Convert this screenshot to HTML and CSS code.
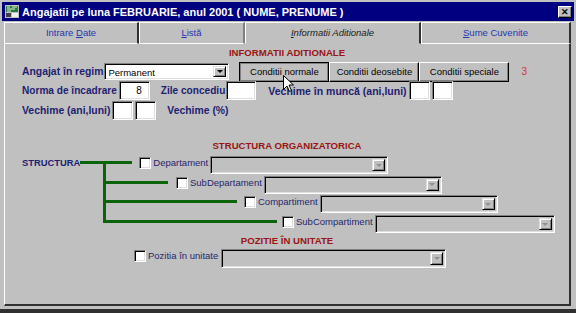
FILE: index.html
```html
<!DOCTYPE html>
<html lang="ro">
<head>
    <meta charset="UTF-8">
    <title>Angajatii pe luna FEBRUARIE</title>
    <link rel="stylesheet" href="styles.css">
</head>
<body>
<div class="window">
    <div class="titlebar">
        <svg class="app-icon" width="14" height="13" viewBox="0 0 14 13">
            <rect x="0" y="0" width="14" height="13" fill="#c0c0c0"/>
            <rect x="1" y="1" width="12" height="6" fill="#2a7a3a"/>
            <path d="M2 2h3M7 2h5M2 4h8M2 6h4" stroke="#e0f0e0" stroke-width="1"/>
            <rect x="1" y="8" width="5" height="4" fill="#404040"/>
            <rect x="7" y="8" width="6" height="4" fill="#f0f0f0"/>
        </svg>
        <span class="title">Angajatii pe luna FEBRUARIE, anul 2001 ( NUME, PRENUME )</span>
        <span class="close">&#x2715;</span>
    </div>

    <div class="tabs">
        <div class="tab tab-intrare">Intrare <u>D</u>ate</div>
        <div class="tab tab-lista"><u>L</u>istă</div>
        <div class="tab tab-info active"><u>I</u>nformatii Aditionale</div>
        <div class="tab tab-sume"><u>S</u>ume Cuvenite</div>
    </div>

    <div class="panel">
        <div class="section-title">INFORMATII ADITIONALE</div>

        <div class="row row-regim">
            <span class="lbl">Angajat în regim</span>
            <span class="combo combo-regim">
                <span class="combo-text">Permanent</span>
                <span class="arrow"><i></i></span>
            </span>
            <span class="btn btn-default">Conditii normale</span>
            <span class="btn">Conditii deosebite</span>
            <span class="btn">Conditii speciale</span>
            <span class="count">3</span>
        </div>

        <div class="row row-norma">
            <span class="lbl">Norma de încadrare</span>
            <span class="field field-norma">8</span>
            <span class="lbl lbl-zile">Zile concediu</span>
            <span class="field field-zile"></span>
            <span class="lbl lbl-munca">Vechime în muncă (ani,luni)</span>
            <span class="field field-small"></span>
            <span class="field field-small"></span>
        </div>

        <div class="row row-vechime">
            <span class="lbl">Vechime (ani,luni)</span>
            <span class="field field-small"></span>
            <span class="field field-small"></span>
            <span class="lbl lbl-proc">Vechime (%)</span>
        </div>

        <div class="section-title section-struct">STRUCTURA ORGANIZATORICA</div>

        <div class="tree">
            <div class="branch branch-1">
                <span class="lbl lbl-struct">STRUCTURA</span>
                <span class="wire"></span>
                <span class="check"></span>
                <span class="check-lbl">Departament</span>
                <span class="combo combo-off"><span class="arrow"><i></i></span></span>
            </div>
            <div class="branch branch-2">
                <span class="wire"></span>
                <span class="check"></span>
                <span class="check-lbl">SubDepartament</span>
                <span class="combo combo-off"><span class="arrow"><i></i></span></span>
            </div>
            <div class="branch branch-3">
                <span class="wire"></span>
                <span class="check"></span>
                <span class="check-lbl">Compartiment</span>
                <span class="combo combo-off"><span class="arrow"><i></i></span></span>
            </div>
            <div class="branch branch-4">
                <span class="wire"></span>
                <span class="check"></span>
                <span class="check-lbl">SubCompartiment</span>
                <span class="combo combo-off combo-wide"><span class="arrow"><i></i></span></span>
            </div>
        </div>

        <div class="section-title section-pozitie">POZITIE ÎN UNITATE</div>

        <div class="row row-pozitie">
            <span class="check"></span>
            <span class="check-lbl">Pozitia în unitate</span>
            <span class="combo combo-off combo-pozitie"><span class="arrow"><i></i></span></span>
        </div>

        <svg class="cursor" width="11" height="18" viewBox="0 0 11 18">
            <path d="M0.5 0.5V14.5L4 11L6.5 16.5L8.5 15.5L6 10H10.5Z" fill="#fff" stroke="#000" stroke-width="1"/>
        </svg>
    </div>
</div>
</body>
</html>
```

FILE: styles.css
```css
body {
    margin: 0;
    padding: 0;
    background: #c0c0c0;
    font-family: "Liberation Sans", Arial, sans-serif;
    font-size: 9.5px;
    color: #22226e;
}

.window {
    width: 576px;
    height: 313px;
    box-sizing: border-box;
    padding: 2px 2px 0 2px;
    border-bottom: 4px solid #303030;
    position: relative;
}

/* title bar */
.titlebar {
    height: 19px;
    background: #000080;
    display: flex;
    align-items: center;
    padding: 0 2px 0 3px;
    color: #fff;
}
.app-icon {
    flex: none;
    margin-right: 3px;
}
.title {
    font-weight: bold;
    font-size: 11px;
    white-space: nowrap;
}
.close {
    margin-left: auto;
    width: 14px;
    height: 12px;
    box-sizing: border-box;
    background: #c0c0c0;
    color: #000;
    font-size: 9px;
    font-weight: bold;
    line-height: 10px;
    text-align: center;
    border: 1px solid;
    border-color: #fff #000 #000 #fff;
    box-shadow: inset -1px -1px #808080;
}

/* tabs */
.tabs {
    display: flex;
    height: 22px;
    margin: 1px 3px 0 2px;
}
.tab {
    box-sizing: border-box;
    height: 22px;
    border-top: 1px solid #fff;
    border-left: 1px solid #fff;
    border-right: 2px solid #303030;
    border-bottom: 1px solid #fff;
    text-align: center;
    line-height: 20px;
    color: #2436b0;
    white-space: nowrap;
}
.tab-intrare { width: 135px; }
.tab-lista { width: 106px; border-right-color: #808080; }
.tab-info { width: 176px; }
.tab-sume { flex: 1; }
.tab.active {
    border-bottom-color: #c0c0c0;
    font-style: italic;
    color: #1a1a1a;
}

/* main panel */
.panel {
    position: relative;
    height: 262px;
    margin: 0 3px 0 2px;
    box-sizing: border-box;
    border-left: 1px solid #fff;
    border-right: 2px solid #303030;
    border-bottom: 2px solid #303030;
    padding: 3px 0 0 17px;
}

.section-title {
    font-weight: bold;
    font-size: 9.6px;
    color: #9a1414;
    text-align: center;
    line-height: 12px;
    margin-left: -17px;
}
.section-struct { margin-top: 20px; }
.section-pozitie { margin-top: 0; }

.row {
    display: flex;
    align-items: center;
}
.row-regim { height: 19px; margin-top: 3px; }
.row-norma { height: 19px; margin-top: 0; }
.row-vechime { height: 19px; margin-top: 1px; }

.lbl {
    font-weight: bold;
    font-size: 10.4px;
    color: #1e1e70;
    white-space: nowrap;
}
.row-norma .lbl { font-size: 10.1px; }
.row-norma .lbl-munca { font-size: 10.5px; }
.lbl-zile { margin-left: 11px; }
.lbl-munca { margin-left: 12px; }
.lbl-proc { margin-left: 11px; }

/* sunken boxes */
.field, .combo, .check {
    box-sizing: border-box;
    background: #fff;
    border: 1px solid;
    border-color: #808080 #fff #fff #808080;
    box-shadow: inset 1px 1px #000, inset -1px -1px #dfdfdf;
}
.field {
    height: 19px;
    margin-left: 2px;
    text-align: right;
    padding-right: 7px;
    line-height: 17px;
    color: #000;
    font-size: 10px;
}
.field-norma { width: 31px; }
.field-zile { width: 30px; margin-left: 1px; }
.field-small { width: 21px; }
.row-norma .field-small:first-of-type { margin-left: 1px; }
.row-vechime .field-small:first-of-type { margin-left: 0; }

.combo {
    display: flex;
    align-items: stretch;
    height: 18px;
    padding: 2px;
}
.combo-regim {
    width: 125px;
    height: 17px;
    margin-left: 1px;
}
.combo-text {
    flex: 1;
    color: #000;
    line-height: 13px;
    padding-left: 1px;
}
.arrow {
    width: 13px;
    margin-left: auto;
    box-sizing: border-box;
    background: #c0c0c0;
    border: 1px solid;
    border-color: #dfdfdf #000 #000 #dfdfdf;
    box-shadow: inset 1px 1px #fff, inset -1px -1px #808080;
    display: flex;
    align-items: center;
    justify-content: center;
}
.arrow i {
    width: 0;
    height: 0;
    border-left: 3px solid transparent;
    border-right: 3px solid transparent;
    border-top: 3px solid #000;
}
.combo-off {
    background: #c0c0c0;
    width: 178px;
}
.combo-off .arrow i { border-top-color: #909090; }
.combo-wide { width: 180px; }
.combo-pozitie { width: 225px; height: 19px; }

/* buttons */
.btn {
    box-sizing: border-box;
    width: 90px;
    height: 20px;
    line-height: 17px;
    text-align: center;
    color: #000;
    background: #c0c0c0;
    border: 1px solid;
    border-color: #fff #000 #000 #fff;
    box-shadow: inset -1px -1px #808080;
    white-space: nowrap;
}
.btn-default {
    margin-left: 10px;
    border: 1px solid #000;
    box-shadow: inset 1px 1px #808080, inset -1px -1px #808080;
}
.btn:last-of-type { width: 89px; margin-left: 1px; }
.count {
    margin-left: 12px;
    color: #d03434;
    font-size: 10px;
}

/* structure tree */
.tree {
    position: relative;
    margin-top: 4px;
}
.tree::before {
    content: "";
    position: absolute;
    left: 81px;
    top: 5px;
    width: 3px;
    height: 60px;
    background: #0a640a;
}
.branch {
    display: flex;
    align-items: flex-start;
    height: 18px;
    margin-bottom: 1.7px;
}
.wire {
    height: 3px;
    background: #0a640a;
    margin-top: 5px;
    margin-right: 6px;
}
.lbl-struct { line-height: 13px; font-size: 9.4px; }
.branch-1 .wire { width: 52px; margin-right: 7px; }
.branch-2 { padding-left: 81px; }
.branch-2 .wire { width: 65px; margin-right: 8px; }
.branch-3 { padding-left: 81px; }
.branch-3 .wire { width: 134px; margin-right: 7px; }
.branch-4 { padding-left: 81px; }
.branch-4 .wire { width: 174px; margin-right: 5px; }

.check {
    width: 12px;
    height: 12px;
    margin-top: 1px;
    flex: none;
}
.check-lbl {
    margin-left: 2px;
    margin-right: 2px;
    line-height: 14px;
    color: #26266e;
    white-space: nowrap;
}

.row-pozitie {
    margin-top: 2px;
    padding-left: 112px;
    align-items: flex-start;
}
.row-pozitie .check-lbl { margin-right: 3px; }

.cursor {
    position: absolute;
    left: 278px;
    top: 31px;
}
```
